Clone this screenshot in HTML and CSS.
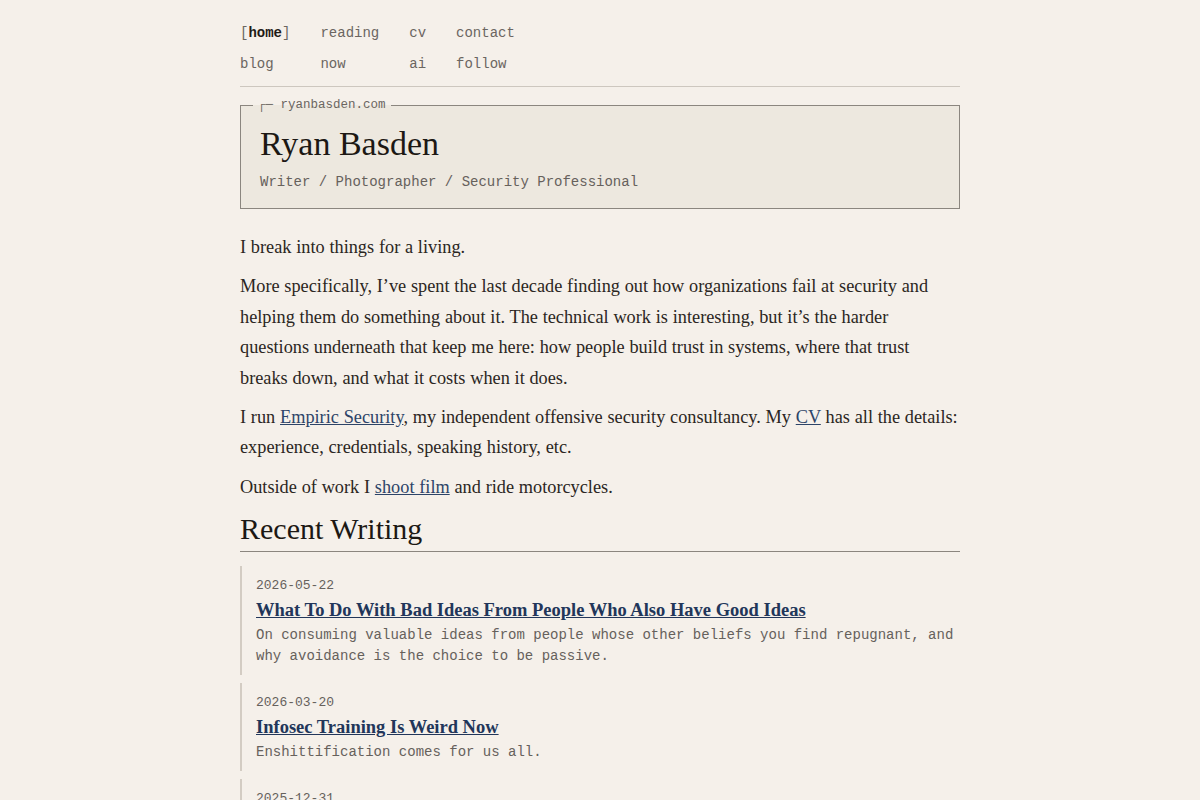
FILE: index.html
```html
<!DOCTYPE html>
<html lang="en">
<head>
  <meta charset="UTF-8" />
  <meta name="viewport" content="width=device-width, initial-scale=1.0" />
  <title>Ryan Basden</title>
  <link rel="stylesheet" href="styles.css">
</head>

<body>
  <div class="page">
    <!-- site nav -->
    <nav class="site-nav">
      <a href="#" class="current">home</a>
      <a href="#">reading</a>
      <a href="#">cv</a>
      <a href="#">contact</a>
      <a href="#">blog</a>
      <a href="#">now</a>
      <a href="#">ai</a>
      <a href="#">follow</a>
    </nav>

    <!-- name card -->
    <fieldset class="masthead">
      <legend><span class="corner">┌─</span> ryanbasden.com</legend>
      <h1>Ryan Basden</h1>
      <p class="tagline">Writer / Photographer / Security Professional</p>
    </fieldset>

    <main class="intro">
      <p>I break into things for a living.</p>
      <p>More specifically, I’ve spent the last decade finding out how organizations fail at security and helping them do something about it. The technical work is interesting, but it’s the harder questions underneath that keep me here: how people build trust in systems, where that trust breaks down, and what it costs when it does.</p>
      <p>I run <a href="#">Empiric Security</a>, my independent offensive security consultancy. My <a href="#">CV</a> has all the details: experience, credentials, speaking history, etc.</p>
      <p>Outside of work I <a href="#">shoot film</a> and ride motorcycles.</p>

      <h2>Recent Writing</h2>

      <ul class="posts">
        <li class="post">
          <time>2026-05-22</time>
          <a class="post-title" href="#">What To Do With Bad Ideas From People Who Also Have Good Ideas</a>
          <p class="post-desc">On consuming valuable ideas from people whose other beliefs you find repugnant, and why avoidance is the choice to be passive.</p>
        </li>
        <li class="post">
          <time>2026-03-20</time>
          <a class="post-title" href="#">Infosec Training Is Weird Now</a>
          <p class="post-desc">Enshittification comes for us all.</p>
        </li>
        <li class="post">
          <time>2025-12-31</time>
          <a class="post-title" href="#">A Year in Review</a>
          <p class="post-desc">Looking back on the last twelve months.</p>
        </li>
      </ul>
    </main>
  </div>
</body>
</html>
```

FILE: styles.css
```css
/* ─── base ─────────────────────────────── */
*,*::before,*::after{box-sizing:border-box;margin:0;padding:0}
html,body{background:#f5f0ea;color:#2b2622}
body{
  font-family:"Liberation Serif","Times New Roman",serif;
  font-size:18.3px;line-height:30.4px;
}
a{color:#2d4468}

.page{width:720px;margin:0 auto}

/* ─── nav ──────────────────────────────── */
.site-nav{
  display:grid;grid-template-columns:repeat(4,auto);justify-content:start;
  column-gap:30px;row-gap:9px;
  padding:22px 0 11px;border-bottom:1px solid #cdc7bf;
  font:14px/22px "Liberation Mono","DejaVu Sans Mono",monospace;
}
.site-nav a{color:#6b6661;text-decoration:none}
.site-nav a.current{color:#1f1b17;font-weight:bold}
.site-nav a.current::before{content:"[";color:#6b6661;font-weight:normal}
.site-nav a.current::after{content:"]";color:#6b6661;font-weight:normal}

/* ─── name card ────────────────────────── */
.masthead{
  margin-top:10px;padding:10px 19px 15px;
  border:1px solid #8b867f;background:#ede8df;
}
.masthead legend{
  margin-left:-7px;padding:0 5px;
  font:12.5px/16px "Liberation Mono","DejaVu Sans Mono",monospace;
  color:#6b6661;
}
.masthead h1{
  font-size:34px;line-height:41px;font-weight:normal;color:#1c1814;
}
.tagline{
  margin-top:7px;
  font:14px/22px "Liberation Mono","DejaVu Sans Mono",monospace;
  color:#66615c;
}

/* ─── intro text ───────────────────────── */
.intro{padding-top:23px}
.intro > p{margin-bottom:9px;word-spacing:.2px}

.intro h2{
  font-size:30px;line-height:36px;font-weight:normal;color:#1c1814;
  padding-bottom:4px;border-bottom:1px solid #8b867f;
}

/* ─── post list ────────────────────────── */
.posts{list-style:none;padding-top:14px}
.post{
  margin-bottom:8px;padding:10px 0 8px 14px;
  border-left:2px solid #d3ccc3;
}
.post time{
  display:block;
  font:13px/20px "Liberation Mono","DejaVu Sans Mono",monospace;
  color:#66615c;
}
.post-title{
  display:block;margin-top:2px;
  font-size:18.5px;line-height:24px;font-weight:bold;color:#22365a;
}
.post-desc{
  margin-top:3px;
  font:14px/21px "Liberation Mono","DejaVu Sans Mono",monospace;
  color:#66615c;
}
```
